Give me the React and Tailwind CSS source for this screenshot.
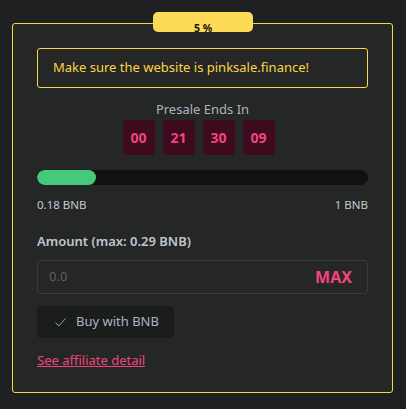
import React from "react";

export default function App() {
  return (
    <div
      className="w-[406px] h-[409px] bg-[#1e2022] pt-[12px] px-[12px]"
      style={{ fontFamily: '"Noto Sans", "Open Sans", sans-serif' }}
    >
      <div className="relative pt-[11px]">
        <div className="absolute left-1/2 -translate-x-1/2 top-0 w-[100px] h-[20px] bg-[#fedb56] rounded-[5px] flex items-end justify-center z-10">
          <span className="text-[10.5px] font-bold leading-[14px] text-[#111] mb-[-3px]">5 %</span>
        </div>
        <div className="w-[381px] h-[370px] bg-[#252626] border border-[#fdd548] rounded-[3px] px-[24px] pt-[24px]">
          <div className="h-[40px] border border-[#fdd548] rounded-[3px] flex items-center px-[15px] text-[13px] text-[#fdd548]">
            Make sure the website is pinksale.finance!
          </div>
          <div className="mt-[11px] text-center text-[13px] leading-[20px] text-[#aab4bf]">Presale Ends In</div>
          <div className="mt-[1px] flex justify-center">
            {["00", "21", "30", "09"].map((n) => (
              <div
                key={n}
                className="w-[32px] h-[35px] mr-[8px] rounded-[4px] bg-[#3d0a1e] flex items-center justify-center text-[14px] font-bold text-[#f0457c]"
              >
                {n}
              </div>
            ))}
          </div>
          <div className="mt-[15px] h-[15px] rounded-full bg-[#101211] overflow-hidden">
            <div className="h-full w-[59px] rounded-full bg-[#46c97a]" />
          </div>
          <div className="mt-[12px] flex justify-between text-[11.5px] leading-[16px] text-[#c3cad3]">
            <span>0.18 BNB</span>
            <span>1 BNB</span>
          </div>
          <div className="mt-[18px] text-[13px] leading-[20px] font-semibold text-[#c0c6cf]">
            Amount (max: 0.29 BNB)
          </div>
          <div className="mt-[9px] h-[34px] border border-[#3a3b3c] rounded-[4px] flex items-center justify-between pl-[11px] pr-[15px]">
            <span className="text-[13px] text-[#5c5e60]">0.0</span>
            <span className="text-[16px] font-bold text-[#f0457c]">MAX</span>
          </div>
          <div className="mt-[12px] w-[137px] h-[32px] bg-[#1b1c1c] rounded-[4px] flex items-center pl-[18px] text-[13px] text-[#a9b4c0]">
            <svg width="11" height="9" viewBox="0 0 11 9" fill="none" stroke="#9aa3ad" strokeWidth="1" className="mr-[10px]">
              <path d="M0.5 4.5 L3.8 8 L10.5 0.5" />
            </svg>
            Buy with BNB
          </div>
          <div className="mt-[9px]">
            <a className="text-[13px] leading-[20px] text-[#f0457c] underline">See affiliate detail</a>
          </div>
        </div>
      </div>
    </div>
  );
}
